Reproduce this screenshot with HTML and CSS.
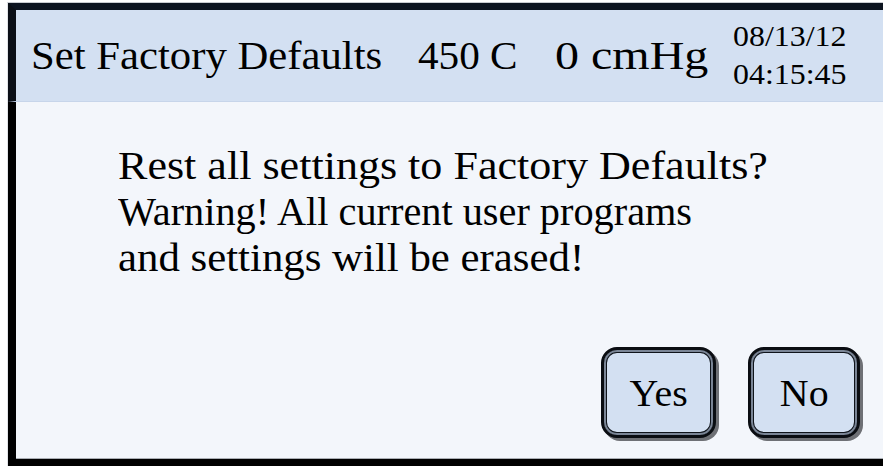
FILE: index.html
```html
<!DOCTYPE html>
<html>
<head>
<meta charset="utf-8">
<link rel="stylesheet" href="styles.css">
</head>
<body>
<div class="screen">
  <header class="bar">
    <span class="cell cell-title"><span class="wide w-title">Set Factory Defaults</span></span>
    <span class="cell cell-temp"><span class="wide w-temp">450 C</span></span>
    <span class="cell cell-press"><span class="wide w-press">0 cmHg</span></span>
    <span class="clock"><span class="wide w-clock">08/13/12</span><span class="wide w-clock">04:15:45</span></span>
  </header>
  <main class="panel">
    <p class="msg">
      <span class="line"><span class="wide w-l1">Rest all settings to Factory Defaults?</span></span>
      <span class="line"><span class="wide w-l2">Warning! All current user programs</span></span>
      <span class="line"><span class="wide w-l3">and settings will be erased!</span></span>
    </p>
    <div class="actions">
      <button class="btn btn-yes"><span class="wide w-btn">Yes</span></button>
      <button class="btn btn-no"><span class="wide w-btn">No</span></button>
    </div>
  </main>
</div>
</body>
</html>
```
FILE: styles.css
```css
html, body {
  margin: 0;
  height: 100%;
  background: #ffffff;
}
body {
  padding: 2px 0 0 7px;
  box-sizing: border-box;
  overflow: hidden;
  font-family: "Liberation Serif", "Times New Roman", serif;
  color: #000;
}
.screen {
  border-top: 1px solid #c9ccd1;
  border-left: 1px solid #e2e4e8;
  height: 464px;
  box-sizing: border-box;
  display: flex;
  flex-direction: column;
}

/* horizontally widened glyph runs, as on the panel's display */
.wide {
  display: inline-block;
  transform-origin: 0 50%;
  white-space: nowrap;
}
.w-title { transform: scaleX(1.068); }
.w-temp { transform: scaleX(1.03); }
.w-press { transform: scaleX(1.2); }
.w-clock { transform: scaleX(1.10); }
.w-l1 { transform: scaleX(1.13); }
.w-l2 { transform: scaleX(1.033); }
.w-l3 { transform: scaleX(1.098); }
.w-btn { transform: scaleX(1.05); transform-origin: 50% 50%; }

/* status bar */
.bar {
  border-top: 7px solid #0d1420;
  border-left: 8px solid #0b0f16;
  background: #d3e0f2;
  height: 99px;
  box-sizing: border-box;
  display: flex;
  align-items: center;
  padding-left: 15px;
  font-size: 40px;
  border-bottom: 1px solid #c7d5ea;
}
.cell { flex: none; }
.cell-title { width: 387px; }
.cell-temp { width: 137px; }
.cell-press { width: 178px; }
.clock {
  display: flex;
  flex-direction: column;
  font-size: 29px;
  line-height: 38px;
  margin-top: -2px;
}

/* dialog body */
.panel {
  flex: 1;
  background: #f3f6fb;
  border-left: 8px solid #000;
  border-bottom: 7px solid #000;
  display: flex;
  flex-direction: column;
  position: relative;
}
.panel::after {
  content: "";
  position: absolute;
  left: 0; right: 0; bottom: 0;
  height: 1px;
  background: #a9adb3;
}
.msg {
  margin: 41px 0 0 102px;
  font-size: 39px;
  line-height: 46px;
}
.line { display: block; }

.actions {
  margin-top: auto;
  display: flex;
  justify-content: flex-end;
  gap: 32px;
  padding: 0 23px 21px 0;
}
.btn {
  font-family: inherit;
  font-size: 38px;
  color: #000;
  background: #d3e0f2;
  height: 91px;
  border: 3px solid #0a0d12;
  border-radius: 16px;
  box-shadow: inset 0 0 0 2px #7a8596, inset 0 0 0 3px #0f141b, 3px 3px 0 #6e7075;
  padding: 0;
}
.btn-yes { width: 115px; }
.btn-no { width: 112px; }
```
